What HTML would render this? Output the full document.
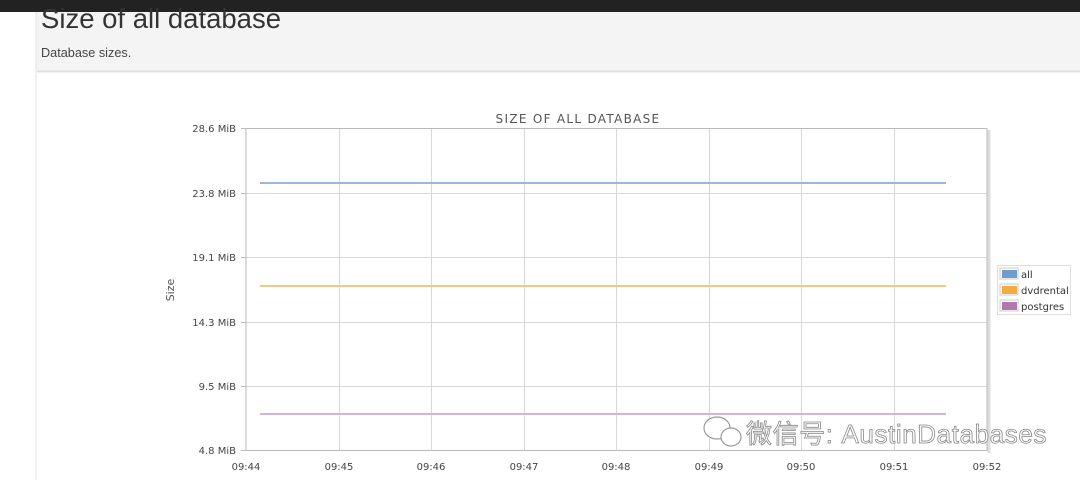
<!DOCTYPE html>
<html><head><meta charset="utf-8"><style>
html,body{margin:0;padding:0;width:1080px;height:480px;overflow:hidden;background:#fff;font-family:"Liberation Sans",sans-serif}
</style></head><body>
<svg width="1080" height="480" xmlns="http://www.w3.org/2000/svg" style="position:absolute;left:0;top:0">
<rect x="0" y="0" width="1080" height="12" fill="#222"/>
<rect x="36" y="12" width="1044" height="60" fill="#f4f4f4"/>
<line x1="36" y1="12" x2="36" y2="480" stroke="#e3e3e3" stroke-width="1"/>
<line x1="37" y1="71.5" x2="1080" y2="71.5" stroke="#e0e0e0" stroke-width="2"/>
<text x="41" y="28" font-size="27.5" fill="#333" font-family="Liberation Sans, sans-serif">Size of all database</text>
<text x="41" y="57" font-size="12.7" fill="#444" font-family="Liberation Sans, sans-serif">Database sizes.</text>
<text x="578" y="123" font-size="12" fill="#555" text-anchor="middle" letter-spacing="1.3" font-family="DejaVu Sans, sans-serif">SIZE OF ALL DATABASE</text>
<g stroke="#d8d8d8" stroke-width="1">
<line x1="246" y1="193.5" x2="987" y2="193.5"/><line x1="246" y1="257.5" x2="987" y2="257.5"/>
<line x1="246" y1="322.5" x2="987" y2="322.5"/><line x1="246" y1="386.5" x2="987" y2="386.5"/>
<line x1="339.5" y1="128" x2="339.5" y2="451"/><line x1="431.5" y1="128" x2="431.5" y2="451"/>
<line x1="524.5" y1="128" x2="524.5" y2="451"/><line x1="616.5" y1="128" x2="616.5" y2="451"/>
<line x1="709.5" y1="128" x2="709.5" y2="451"/><line x1="801.5" y1="128" x2="801.5" y2="451"/>
<line x1="894.5" y1="128" x2="894.5" y2="451"/>
</g>
<rect x="246" y="128.5" width="741" height="322" fill="none" stroke="#bbb" stroke-width="1"/>
<line x1="989" y1="130" x2="989" y2="453" stroke="#ddd" stroke-width="3"/>
<g stroke="#bbb"><line x1="241" y1="128.5" x2="246" y2="128.5"/><line x1="241" y1="193.5" x2="246" y2="193.5"/><line x1="241" y1="257.5" x2="246" y2="257.5"/><line x1="241" y1="322.5" x2="246" y2="322.5"/><line x1="241" y1="386.5" x2="246" y2="386.5"/><line x1="241" y1="450.5" x2="246" y2="450.5"/></g>
<line x1="260" y1="183" x2="946" y2="183" stroke="#9cb6d4" stroke-width="2"/>
<line x1="260" y1="286" x2="946" y2="286" stroke="#efc88a" stroke-width="2"/>
<line x1="260" y1="414" x2="946" y2="414" stroke="#d8b2d4" stroke-width="2"/>
<g font-size="10" fill="#444" text-anchor="end" font-family="DejaVu Sans, sans-serif">
<text x="236" y="132">28.6 MiB</text><text x="236" y="197">23.8 MiB</text><text x="236" y="261">19.1 MiB</text>
<text x="236" y="326">14.3 MiB</text><text x="236" y="390">9.5 MiB</text><text x="236" y="454">4.8 MiB</text></g>
<text x="174" y="290" font-size="11" fill="#555" text-anchor="middle" transform="rotate(-90 174 290)" font-family="DejaVu Sans, sans-serif">Size</text>
<g font-size="10" fill="#444" text-anchor="middle" font-family="DejaVu Sans, sans-serif">
<text x="246" y="470">09:44</text><text x="339" y="470">09:45</text><text x="431" y="470">09:46</text><text x="524" y="470">09:47</text>
<text x="616" y="470">09:48</text><text x="709" y="470">09:49</text><text x="801" y="470">09:50</text><text x="894" y="470">09:51</text><text x="987" y="470">09:52</text></g>
<rect x="997.5" y="265.5" width="73" height="49" fill="#fff" stroke="#ddd"/>
<rect x="1000" y="268" width="18" height="11" fill="#fff" stroke="#ccc"/><rect x="1002" y="270" width="15" height="8" fill="#6f9ccc"/>
<rect x="1000" y="284" width="18" height="11" fill="#fff" stroke="#ccc"/><rect x="1002" y="286" width="15" height="8" fill="#f3ad3f"/>
<rect x="1000" y="300" width="18" height="11" fill="#fff" stroke="#ccc"/><rect x="1002" y="302" width="15" height="8" fill="#b07aac"/>
<g font-size="10" fill="#333" font-family="DejaVu Sans, sans-serif"><text x="1021" y="278">all</text><text x="1021" y="294">dvdrental</text><text x="1021" y="310">postgres</text></g>
<g fill="#fff" stroke="#999" stroke-width="1.2"><ellipse cx="717" cy="428" rx="13" ry="11"/><ellipse cx="731" cy="437" rx="10" ry="9"/></g>
<text x="746" y="443" font-size="26" fill="#fff" stroke="#888" stroke-width="0.8" letter-spacing="0.6" font-family="Liberation Sans, 'Noto Sans CJK SC', sans-serif">微信号: AustinDatabases</text>
</svg>
</body></html>
